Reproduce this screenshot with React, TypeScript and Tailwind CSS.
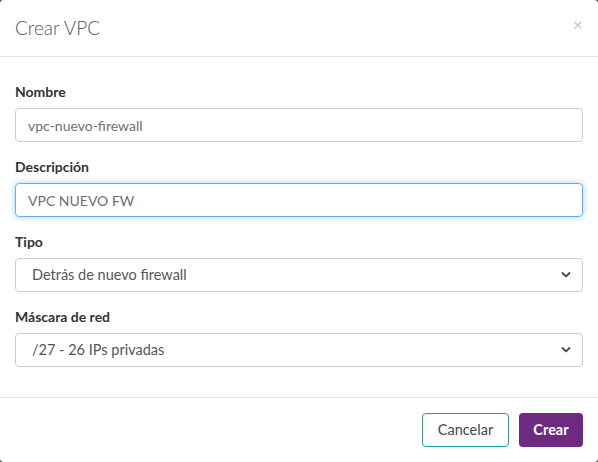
import React from "react";

const font = { fontFamily: "Lato, 'Open Sans', sans-serif" };

function Chevron() {
  return (
    <svg width="10" height="7" viewBox="0 0 10 7" className="absolute right-[11px] top-1/2 -translate-y-1/2">
      <path d="M1.5 1.5 L5 4.8 L8.5 1.5" fill="none" stroke="#444" strokeWidth="1.8" strokeLinecap="round" strokeLinejoin="round" />
    </svg>
  );
}

function Field({ label, children }: { label: string; children: React.ReactNode }) {
  return (
    <div className="mb-[15px]">
      <div className="mb-[6px] text-[14px] leading-[20px] font-bold text-[#333]">{label}</div>
      {children}
    </div>
  );
}

export default function App() {
  return (
    <div className="h-[462px] w-[598px] bg-[#5a5a5a]" style={font}>
      <div className="flex h-full w-full flex-col rounded-[4px] bg-white">
        <div className="flex h-[57px] items-center justify-between border-b border-[#e5e5e5] pl-[15px] pr-[15px]">
          <div className="text-[19px] font-light text-[#555]">Crear VPC</div>
          <div className="mt-[-8px] text-[18px] leading-none text-[#c8c8c8]">×</div>
        </div>
        <div className="flex-1 border-b border-[#e5e5e5] px-[15px] pt-[25px]">
          <Field label="Nombre">
            <div className="flex h-[34px] items-center rounded-[4px] border border-[#ccc] px-[12px] text-[14px] text-[#6f6f6f]">
              vpc-nuevo-firewall
            </div>
          </Field>
          <Field label="Descripción">
            <div className="flex h-[34px] items-center rounded-[4px] border border-[#66afe9] px-[12px] text-[14px] text-[#6f6f6f] shadow-[0_0_6px_rgba(102,175,233,0.6)]">
              VPC NUEVO FW
            </div>
          </Field>
          <Field label="Tipo">
            <div className="relative flex h-[34px] items-center rounded-[4px] border border-[#ccc] px-[16px] text-[14.5px] text-[#555]">
              Detrás de nuevo firewall
              <Chevron />
            </div>
          </Field>
          <Field label="Máscara de red">
            <div className="relative flex h-[34px] items-center rounded-[4px] border border-[#ccc] px-[16px] text-[14.5px] text-[#555]">
              /27 - 26 IPs privadas
              <Chevron />
            </div>
          </Field>
        </div>
        <div className="flex h-[64px] items-center justify-end gap-[10px] px-[15px]">
          <div className="flex h-[34px] w-[87px] items-center justify-center rounded-[4px] border border-[#1aa39f] text-[14.5px] text-[#444]">
            Cancelar
          </div>
          <div className="flex h-[34px] w-[64px] items-center justify-center rounded-[4px] bg-[#6d2a80] text-[14.5px] font-bold text-white">
            Crear
          </div>
        </div>
      </div>
    </div>
  );
}
